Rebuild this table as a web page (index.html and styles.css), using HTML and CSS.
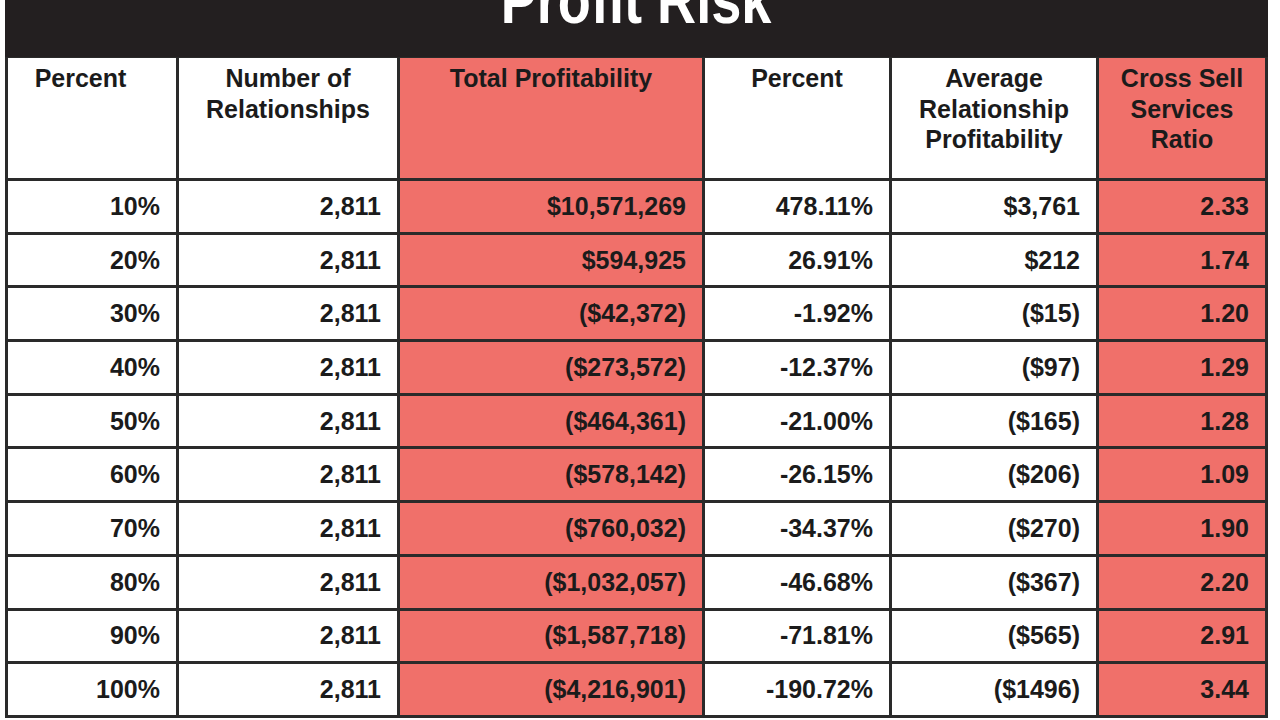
FILE: index.html
```html
<!DOCTYPE html>
<html lang="en">
<head>
<meta charset="utf-8">
<title>Profit Risk</title>
<link rel="stylesheet" href="styles.css">
</head>
<body>
<div class="sheet">
  <div class="banner"><h1 class="title">Profit Risk</h1></div>
  <div class="grid">
    <div class="cell head first">Percent</div>
    <div class="cell head">Number of<br>Relationships</div>
    <div class="cell head red">Total Profitability</div>
    <div class="cell head">Percent</div>
    <div class="cell head">Average<br>Relationship<br>Profitability</div>
    <div class="cell head red">Cross Sell<br>Services<br>Ratio</div>

    <div class="cell num">10%</div><div class="cell num">2,811</div><div class="cell num red">$10,571,269</div><div class="cell num">478.11%</div><div class="cell num">$3,761</div><div class="cell num red">2.33</div>
    <div class="cell num">20%</div><div class="cell num">2,811</div><div class="cell num red">$594,925</div><div class="cell num">26.91%</div><div class="cell num">$212</div><div class="cell num red">1.74</div>
    <div class="cell num">30%</div><div class="cell num">2,811</div><div class="cell num red">($42,372)</div><div class="cell num">-1.92%</div><div class="cell num">($15)</div><div class="cell num red">1.20</div>
    <div class="cell num">40%</div><div class="cell num">2,811</div><div class="cell num red">($273,572)</div><div class="cell num">-12.37%</div><div class="cell num">($97)</div><div class="cell num red">1.29</div>
    <div class="cell num">50%</div><div class="cell num">2,811</div><div class="cell num red">($464,361)</div><div class="cell num">-21.00%</div><div class="cell num">($165)</div><div class="cell num red">1.28</div>
    <div class="cell num">60%</div><div class="cell num">2,811</div><div class="cell num red">($578,142)</div><div class="cell num">-26.15%</div><div class="cell num">($206)</div><div class="cell num red">1.09</div>
    <div class="cell num">70%</div><div class="cell num">2,811</div><div class="cell num red">($760,032)</div><div class="cell num">-34.37%</div><div class="cell num">($270)</div><div class="cell num red">1.90</div>
    <div class="cell num">80%</div><div class="cell num">2,811</div><div class="cell num red">($1,032,057)</div><div class="cell num">-46.68%</div><div class="cell num">($367)</div><div class="cell num red">2.20</div>
    <div class="cell num">90%</div><div class="cell num">2,811</div><div class="cell num red">($1,587,718)</div><div class="cell num">-71.81%</div><div class="cell num">($565)</div><div class="cell num red">2.91</div>
    <div class="cell num">100%</div><div class="cell num">2,811</div><div class="cell num red">($4,216,901)</div><div class="cell num">-190.72%</div><div class="cell num">($1496)</div><div class="cell num red">3.44</div>
  </div>
</div>
</body>
</html>
```

FILE: styles.css
```css
html, body {
  margin: 0;
  padding: 0;
  background: #ffffff;
  overflow: hidden;
}

.sheet {
  width: 1263px;
  padding-left: 5px;
  font-family: "Liberation Sans", Arial, sans-serif;
  color: #1b1b1b;
}

.banner {
  height: 57px;
  background: #231f20;
  display: flex;
  justify-content: center;
  overflow: hidden;
}

.title {
  margin: -33px 0 0 0;
  font-family: "Liberation Sans", Arial, sans-serif;
  font-weight: 700;
  font-size: 66px;
  line-height: 66px;
  color: #ffffff;
  transform: scaleX(0.82);
  white-space: nowrap;
}

.grid {
  display: grid;
  grid-template-columns: 168px 218px 302px 184px 204px 166px;
  grid-template-rows: 120px repeat(10, 50.7px);
  gap: 3px;
  padding: 1px 3px 3px 3px;
  background: #2a2a2a;
}

.cell {
  background: #ffffff;
  font-weight: 700;
  font-size: 25px;
}

.cell.red {
  background: #f0706a;
}

.head {
  text-align: center;
  line-height: 30.5px;
  padding-top: 5px;
}

.head.first {
  padding-right: 23px;
}

.num {
  display: flex;
  align-items: center;
  justify-content: flex-end;
  padding-right: 16px;
}
```
